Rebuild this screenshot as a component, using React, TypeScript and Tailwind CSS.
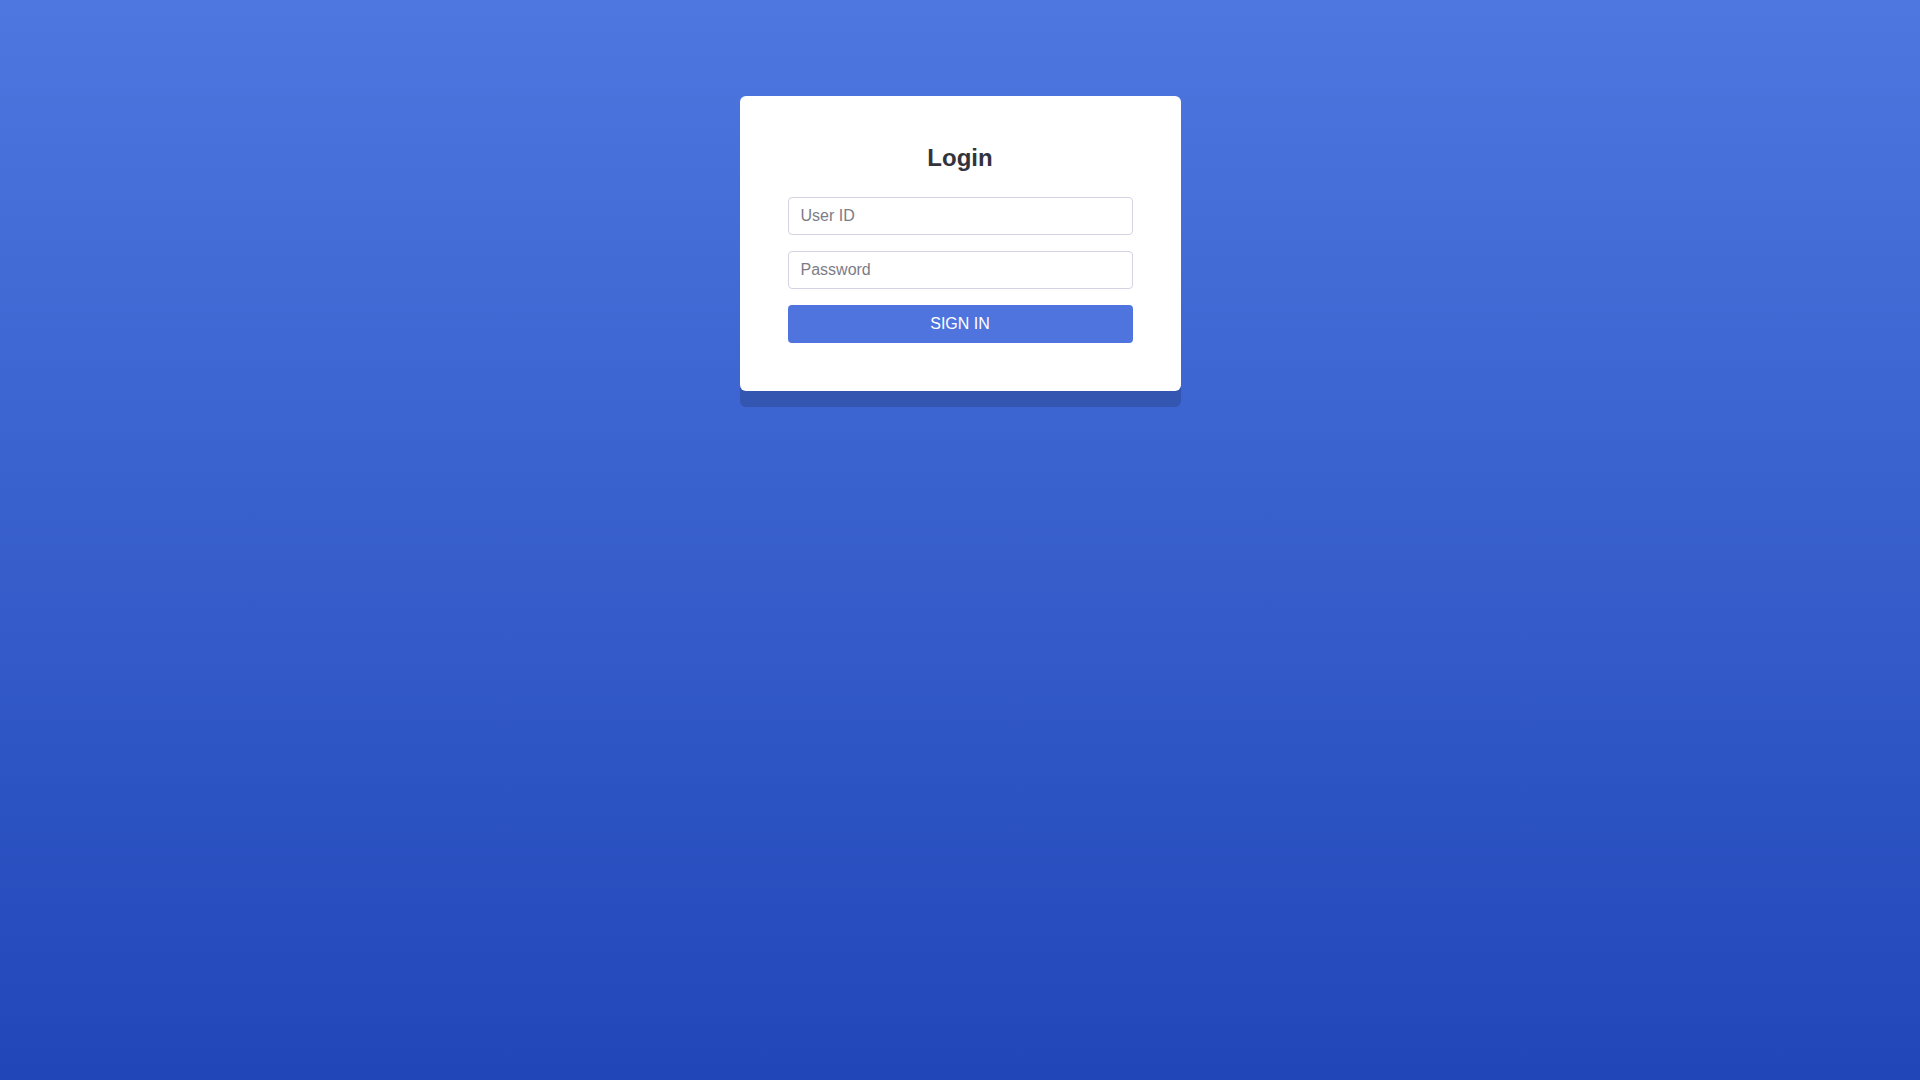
import React, { useState } from 'react';

const App: React.FC = () => {
  const [userId, setUserId] = useState('');
  const [password, setPassword] = useState('');

  return (
    <div
      className="min-h-screen w-full bg-gradient-to-b from-[#4f77e0] to-[#2146b8] flex justify-center items-start pt-[96px]"
      style={{ fontFamily: '"Liberation Sans", Arial, Helvetica, sans-serif' }}
    >
      <form
        onSubmit={(e) => e.preventDefault()}
        className="w-[441px] bg-white rounded-[6px] px-12 pt-12 pb-12 flex flex-col shadow-[0_16px_0_rgba(0,0,0,0.15)]"
      >
        <h2 className="text-center text-[24px] font-bold leading-[28px] text-[#33333d] mb-[25px]">Login</h2>

        <input
          type="text"
          placeholder="User ID"
          value={userId}
          onChange={(e) => setUserId(e.target.value)}
          className="h-[38px] w-full px-3 text-[16px] text-[#333] border border-[#d3d3e3] rounded-[4px] outline-none placeholder:text-[#7c7c88] mb-4"
        />
        <input
          type="password"
          placeholder="Password"
          value={password}
          onChange={(e) => setPassword(e.target.value)}
          className="h-[38px] w-full px-3 text-[16px] text-[#333] border border-[#d3d3e3] rounded-[4px] outline-none placeholder:text-[#7c7c88] mb-4"
        />
        <button
          type="submit"
          className="h-[38px] w-full bg-[#4f74de] text-white text-[16px] rounded-[4px] uppercase"
        >
          Sign in
        </button>
      </form>
    </div>
  );
};

export default App;
